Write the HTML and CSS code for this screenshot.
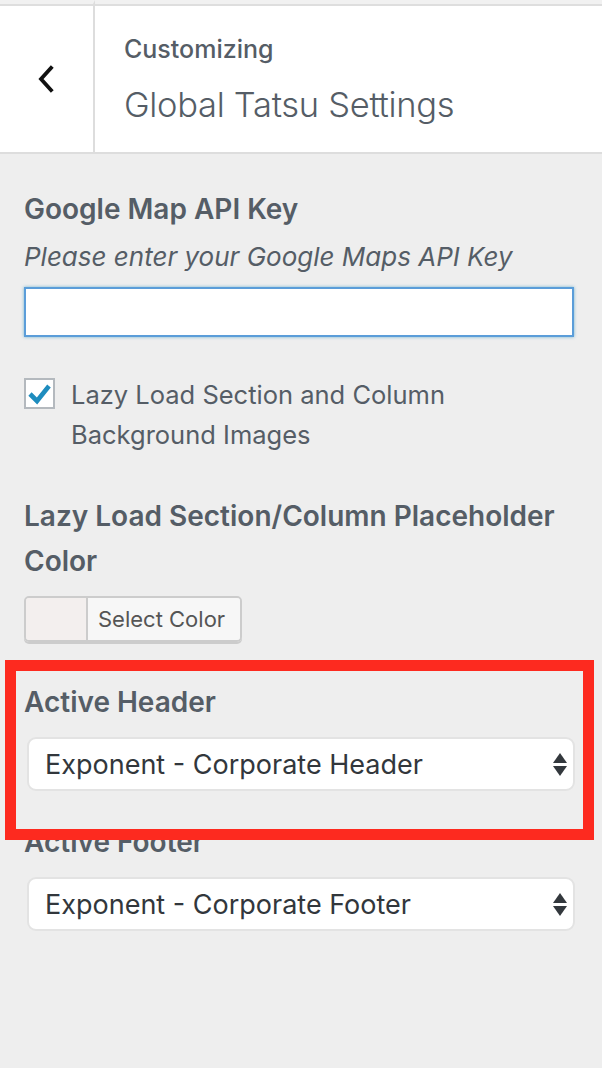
FILE: index.html
```html
<!DOCTYPE html>
<html lang="en">
<head>
<meta charset="utf-8">
<title>Global Tatsu Settings</title>
<link rel="stylesheet" href="styles.css">
</head>
<body>
<div class="frame">
  <div class="panel">
    <header class="head">
      <div class="back">
        <svg class="chev" width="22" height="30" viewBox="0 0 22 30" aria-hidden="true">
          <polyline points="16,4 6,15 16,26" fill="none" stroke="#111" stroke-width="3.8" stroke-linecap="square" stroke-linejoin="miter"/>
        </svg>
      </div>
      <div class="titlebox">
        <div class="kicker">Customizing</div>
        <div class="title">Global Tatsu Settings</div>
      </div>
    </header>

    <main class="body">
      <section class="ctrl">
        <h3 class="label">Google Map API Key</h3>
        <p class="desc">Please enter your Google Maps API Key</p>
        <div class="input"></div>
      </section>

      <section class="ctrl check-row">
        <span class="box">
          <svg width="26" height="22" viewBox="0 0 26 22" aria-hidden="true">
            <polyline points="3,11 10,18 22,3" fill="none" stroke="#1e8cbe" stroke-width="4.6" stroke-linecap="butt" stroke-linejoin="miter"/>
          </svg>
        </span>
        <span class="check-text">Lazy Load Section and Column Background Images</span>
      </section>

      <section class="ctrl color-ctrl">
        <h3 class="label tall">Lazy Load Section/Column Placeholder Color</h3>
        <div class="colorbtn">
          <span class="swatch"></span>
          <span class="colortext">Select Color</span>
        </div>
      </section>

      <section class="ctrl sel-ctrl header-ctrl">
        <h3 class="label">Active Header</h3>
        <div class="select">
          <span>Exponent - Corporate Header</span>
          <span class="arrows"><i class="up"></i><i class="down"></i></span>
        </div>
      </section>

      <section class="ctrl sel-ctrl footer-ctrl">
        <h3 class="label">Active Footer</h3>
        <div class="select">
          <span>Exponent - Corporate Footer</span>
          <span class="arrows"><i class="up"></i><i class="down"></i></span>
        </div>
      </section>
    </main>

    <div class="highlight"></div>
  </div>
  <div class="scroll"></div>
</div>
</body>
</html>
```

FILE: styles.css
```css
* { box-sizing: border-box; }

html, body {
  margin: 0;
  padding: 0;
  background: #eeeeee;
  height: 100%;
}

body {
  font-family: Inter, "Liberation Sans", Arial, sans-serif;
  color: #555d66;
}

.frame {
  display: flex;
  min-height: 1068px;
}

.panel {
  position: relative;
  flex: 1;
  border-right: 2px solid #e2e2e2;
}

.scroll {
  width: 3px;
  background: linear-gradient(#6f8cb5 0, #6f8cb5 1030px, #c9ccd1 1030px);
}

/* header */
.head {
  display: flex;
  height: 154px;
  background: #fff;
  border-bottom: 2px solid #dddddd;
}

.back {
  width: 95px;
  border-top: 4px solid #f1f1f1;
  box-shadow: inset 0 2px 0 #dedede;
  border-right: 2px solid #dddddd;
  display: flex;
  align-items: center;
  justify-content: center;
  padding-top: 2px;
}

.chev { margin-left: -2px; }

.titlebox {
  flex: 1;
  border-top: 4px solid #f1f1f1;
  box-shadow: inset 0 2px 0 #dedede;
  padding: 30px 0 0 29px;
}

.kicker {
  font-size: 25px;
  line-height: 30px;
  font-weight: 500;
  color: #555d66;
}

.title {
  margin-top: 21px;
  font-size: 34.5px;
  line-height: 40px;
  font-weight: 300;
  color: #555d66;
  letter-spacing: -0.3px;
}

/* body */
.body {
  padding: 38px 28px 0 24px;
}

.ctrl { margin: 0; }

.label {
  margin: 0;
  font-size: 28px;
  line-height: 34px;
  font-weight: 600;
  color: #555d66;
}

.label.tall { line-height: 45px; }

.desc {
  margin: 15px 0 0;
  font-size: 26px;
  line-height: 32px;
  font-style: italic;
  color: #555d66;
}

.input {
  margin-top: 14px;
  width: 550px;
  height: 50px;
  background: #fff;
  border: 2px solid #5b9dd9;
  box-shadow: 0 0 3px rgba(30, 140, 190, 0.6);
}

.check-row {
  display: flex;
  align-items: flex-start;
  gap: 16px;
  margin-top: 38px;
  padding-right: 40px;
}

.box {
  flex: none;
  width: 31px;
  height: 31px;
  margin-top: 3px;
  border: 2px solid #b4b9be;
  background: #fff;
  display: flex;
  align-items: center;
  justify-content: center;
}

.check-text {
  font-size: 25.5px;
  line-height: 40px;
  color: #555d66;
}

.color-ctrl { margin-top: 39px; }

.colorbtn {
  display: flex;
  width: 218px;
  height: 46px;
  margin-top: 12px;
  border: 2px solid #cccccc;
  border-radius: 5px;
  overflow: hidden;
  box-shadow: 0 2px 0 #cccccc;
}

.swatch {
  width: 62px;
  background: #f3efee;
  border-right: 2px solid #cccccc;
}

.colortext {
  flex: 1;
  background: #f7f7f7;
  font-size: 22px;
  line-height: 42px;
  padding-left: 10px;
  color: #555555;
}

.header-ctrl { margin-top: 43px; }
.footer-ctrl { margin-top: 34px; }

.sel-ctrl .select { margin-top: 18px; }

.select {
  margin-left: 3px;
  width: 548px;
  height: 54px;
  background: #fff;
  border: 2px solid #e3e3e3;
  border-radius: 9px;
  display: flex;
  align-items: center;
  justify-content: space-between;
  padding: 0 6px 0 16px;
  font-size: 27px;
  color: #32373c;
}

.arrows {
  display: flex;
  flex-direction: column;
  align-items: center;
  gap: 3px;
}

.arrows i {
  display: block;
  width: 0;
  height: 0;
  border-left: 7px solid transparent;
  border-right: 7px solid transparent;
}

.arrows .up { border-bottom: 10px solid #33383d; }
.arrows .down { border-top: 10px solid #33383d; }

/* annotation overlay */
.highlight {
  position: absolute;
  left: 5px;
  top: 660px;
  width: 589px;
  height: 180px;
  border: 11px solid #fd2a1f;
  pointer-events: none;
}
```
